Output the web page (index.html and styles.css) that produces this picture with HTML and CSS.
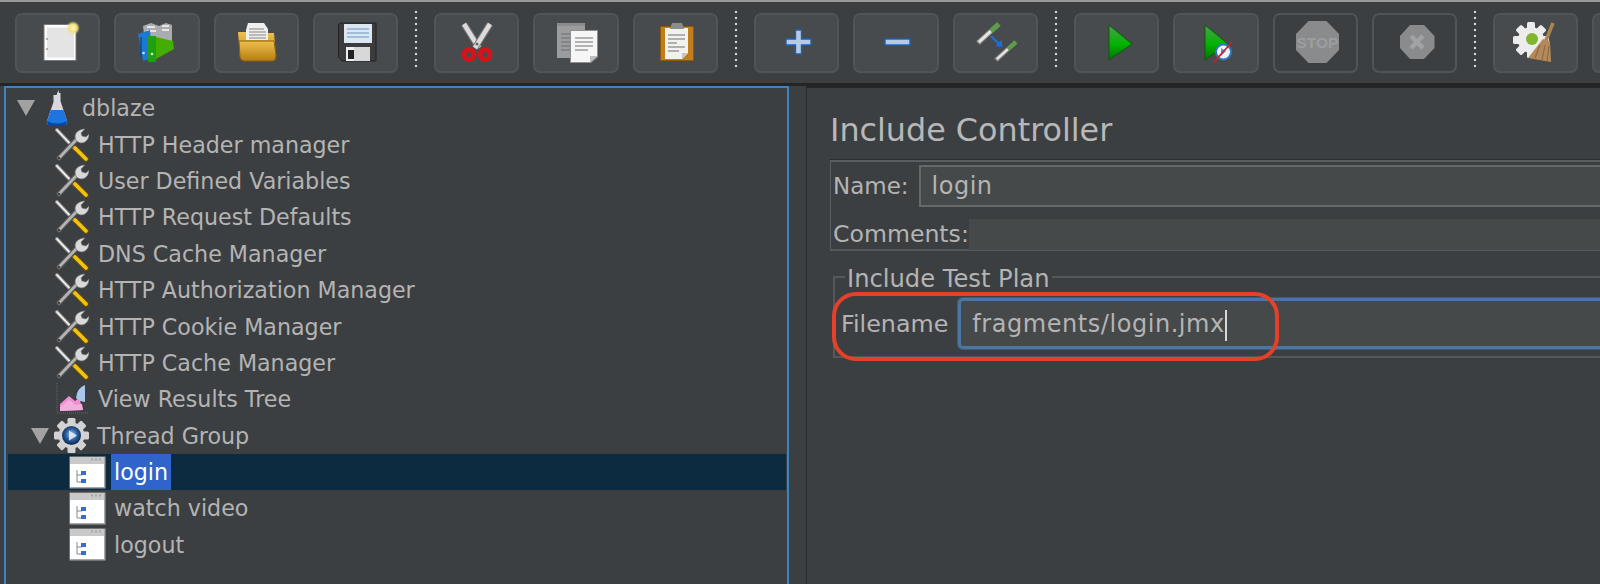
FILE: index.html
```html
<!DOCTYPE html>
<html lang="en">
<head>
<meta charset="utf-8">
<title>JMeter Include Controller</title>
<link rel="stylesheet" href="styles.css">
</head>
<body>
<svg class="defs" width="0" height="0" aria-hidden="true">
  <defs>
    <linearGradient id="yel" x1="0" y1="0" x2="0" y2="1"><stop offset="0" stop-color="#eec04e"/><stop offset="1" stop-color="#b47d10"/></linearGradient>
    <linearGradient id="grn" x1="0" y1="0" x2="0" y2="1"><stop offset="0" stop-color="#4fa04f"/><stop offset=".55" stop-color="#00b400"/><stop offset="1" stop-color="#076d07"/></linearGradient>
    <radialGradient id="glow"><stop offset="0" stop-color="#fff6c0"/><stop offset=".55" stop-color="#f3e27c"/><stop offset="1" stop-color="#f3e27c" stop-opacity="0"/></radialGradient>
    <radialGradient id="ball" cx=".5" cy=".45"><stop offset="0" stop-color="#a9c8ee"/><stop offset=".6" stop-color="#2c5f9e"/><stop offset="1" stop-color="#10305c"/></radialGradient>
    <symbol id="i-wrench" viewBox="0 0 34 34">
      <path d="M2 2 L20 21" stroke="#8e8e8e" stroke-width="3.8" stroke-linecap="round"/>
      <path d="M2 2 L20 21" stroke="#f4f4f4" stroke-width="1.8" stroke-linecap="round"/>
      <path d="M20 20 L31 31" stroke="#6b5200" stroke-width="5.4" stroke-linecap="round"/>
      <path d="M20 20 L31 31" stroke="#f3c20f" stroke-width="3.8" stroke-linecap="round"/>
      <path d="M4 30 L23 10" stroke="#555" stroke-width="5" stroke-linecap="round"/>
      <path d="M4 30 L23 10" stroke="#b4b4b4" stroke-width="2.8" stroke-linecap="round"/>
      <path d="M21 12 C18 6 23 1 30 1 L26 5 L27 8 L31 9 L34 6 C34 12 29 17 23 14 Z" fill="#d9d9d9" stroke="#777" stroke-width=".7"/>
      <circle cx="4" cy="30" r="1.2" fill="#3c3f41"/>
    </symbol>
    <symbol id="i-doc" viewBox="0 0 37 33">
      <rect x=".5" y=".5" width="36" height="32" fill="#a8a8a8"/>
      <rect x="1" y="1" width="34" height="30" fill="#fff"/>
      <rect x="1" y="1" width="34" height="7" fill="#c9c9c9"/>
      <path d="M26 3.500h2M30 3.500h2M22 3.500h2" stroke="#a5a5a5" stroke-width="2"/>
      <path d="M8 14V26H13M8 19H13" stroke="#8a8a8a" fill="none"/>
      <rect x="12" y="15" width="5" height="4" fill="#2f6fd4"/>
      <rect x="12" y="23" width="5" height="4" fill="#2f6fd4"/>
    </symbol>
    <symbol id="i-gear" viewBox="0 0 37 37">
      <g fill="#d2d2d2">
        <rect x="14.5" y="1" width="8" height="35" rx="1.5"/>
        <rect x="14.5" y="1" width="8" height="35" rx="1.5" transform="rotate(45 18.5 18.5)"/>
        <rect x="14.5" y="1" width="8" height="35" rx="1.5" transform="rotate(90 18.5 18.5)"/>
        <rect x="14.5" y="1" width="8" height="35" rx="1.5" transform="rotate(135 18.5 18.5)"/>
        <circle cx="18.5" cy="18.5" r="13"/>
      </g>
      <circle cx="18.5" cy="18.5" r="9.5" fill="url(#ball)"/>
      <path d="M16 13.5 L24 18.5 L16 23.5 Z" fill="#d5e3f5"/>
    </symbol>
  </defs>
</svg>

<header class="toolbar">
  <button class="tool" title="New"><svg class="ico" viewBox="0 0 44 44"><rect x="7.500" y="3" width="33" height="37" fill="#777"/><rect x="8.500" y="4" width="31" height="35" fill="#fdfdfd"/><rect x="11" y="6.500" width="27" height="30" fill="#e4e4e4"/><circle cx="11" cy="18" r="1" fill="#999"/><circle cx="11" cy="28" r="1" fill="#999"/><circle cx="37" cy="7" r="7" fill="url(#glow)"/></svg></button>
  <button class="tool" title="Templates"><svg class="ico" viewBox="0 0 44 44"><path d="M8 5l8-3 8 3 7-3 6 2v18H10z" fill="#a9adb0"/><path d="M12 6h8M27 5h7M12 10h9M27 9h7" stroke="#e5e5e5" stroke-width="2"/><path d="M3 13 L15 9 L17 37 L8 40 Z" fill="#1c78d0"/><path d="M6 16v20" stroke="#0b4d90" stroke-width="1.500"/><circle cx="8.500" cy="32" r="1.300" fill="#cfe3f7"/><path d="M21 16 L38 20 L39 28 L21 38 Z" fill="#44ae00"/><rect x="13" y="15" width="8" height="26" fill="#1fa010"/><circle cx="17" cy="33" r="1.300" fill="#e7ffe0"/></svg></button>
  <button class="tool" title="Open"><svg class="ico" viewBox="0 0 44 44"><path d="M12 9 L14 2 H30 L34 8 V30 H12Z" fill="#efefef"/><path d="M15 8h15M15 11h17M15 14h17M15 17h17" stroke="#a9a9a9" stroke-width="1.300"/><path d="M4 11 H12 V19 H34 V12 H40 L42 34 Q42 40 38 40 H10 Q7 40 6 36 Z" fill="url(#yel)"/><path d="M5 20 H40 L42 34 Q42 40 38 40 H10 Q7 40 6 36 Z" fill="url(#yel)" stroke="#8a5f0c"/></svg></button>
  <button class="tool" title="Save"><svg class="ico" viewBox="0 0 44 44"><path d="M6 2 H42 V40 H8 L4.500 36 V4 Z" fill="#3c3c3e" stroke="#222"/><rect x="10" y="3" width="28" height="19" fill="#dce7f2"/><path d="M13 8H35M13 12H35M13 16H35" stroke="#8eb0d6" stroke-width="1.300"/><rect x="12" y="26" width="24" height="14" fill="#d8d8d8"/><rect x="12" y="26" width="8" height="14" fill="#efefef"/><rect x="14" y="29" width="6" height="9" fill="#222"/></svg></button>
  <span class="sep"></span>
  <button class="tool" title="Cut"><svg class="ico" viewBox="0 0 44 44"><path d="M9 3 L24 27" stroke="#777" stroke-width="6.500"/><path d="M9 3 L24 27" stroke="#dcdcdc" stroke-width="4.500"/><path d="M35 3 L20 27" stroke="#777" stroke-width="6.500"/><path d="M35 3 L20 27" stroke="#dcdcdc" stroke-width="4.500"/><circle cx="14" cy="33.500" r="5" fill="none" stroke="#d3141a" stroke-width="5"/><circle cx="30" cy="33.500" r="5" fill="none" stroke="#d3141a" stroke-width="5"/><circle cx="22" cy="23" r="1.500" fill="#666"/></svg></button>
  <button class="tool" title="Copy"><svg class="ico" viewBox="0 0 44 44"><rect x="3" y="2" width="28" height="35" fill="#9a9c9d"/><rect x="3" y="2" width="28" height="3" fill="#8a8c8d"/><path d="M7 13H22M7 17H22M7 21H22M7 25H22M7 29H22" stroke="#7b7d7e" stroke-width="1.300"/><path d="M16 9 H44 V36 L37 42 H16 Z" fill="#8f8f8f"/><path d="M17 10 H43 V35 L36 41 H17 Z" fill="#f6f6f6"/><path d="M21 17H39M21 21H39M21 25H39M21 29H34" stroke="#9d9d9d" stroke-width="1.300"/><path d="M43 35 H36 V41 Z" fill="#bdbdbd"/></svg></button>
  <button class="tool" title="Paste"><svg class="ico" viewBox="0 0 44 44"><rect x="7" y="5" width="34" height="35" rx="1" fill="#8b5a08"/><rect x="8" y="6" width="32" height="33" fill="#c17f1b"/><path d="M12 7 H35 V32 L29 38 H12 Z" fill="#f1f1ee"/><path d="M15 14H32M15 18H32M15 22H24M15 26H32M15 30H26" stroke="#9a9a9a" stroke-width="1.300"/><path d="M35 32 H29 V38 Z" fill="#c8c8c8"/><path d="M17 8 L19 2 H29 L31 8 Z" fill="#8a8d8b"/></svg></button>
  <span class="sep"></span>
  <button class="tool" title="Expand all"><svg class="ico" viewBox="0 0 44 44"><path d="M20.500 9 H26.500 V18 H36 V24 H26.500 V33 H20.500 V24 H11 V18 H20.500 Z" fill="#b3cbe8" stroke="#1f5fb0" stroke-width="1.400"/></svg></button>
  <button class="tool" title="Collapse all"><svg class="ico" viewBox="0 0 44 44"><rect x="11" y="18" width="25" height="6" fill="#b3cbe8" stroke="#1f5fb0" stroke-width="1.400"/></svg></button>
  <button class="tool" title="Toggle"><svg class="ico" viewBox="0 0 44 44"><path d="M5 22 L18 10" stroke="#9b9b9b" stroke-width="5"/><path d="M6 21 L18 10" stroke="#e8e8e8" stroke-width="2.500"/><path d="M18 10 L26 3" stroke="#5d9c4a" stroke-width="5"/><path d="M23 39 L35 28" stroke="#9b9b9b" stroke-width="4.400"/><path d="M24 38 L35 28" stroke="#e8e8e8" stroke-width="2"/><path d="M35 28 L43 21" stroke="#5d9c4a" stroke-width="4.400"/><path d="M18 15 L26 23" stroke="#1c6fe0" stroke-width="2.200"/><path d="M29.500 26 L22.500 25 L28.500 19 Z" fill="#1c6fe0"/></svg></button>
  <span class="sep"></span>
  <button class="tool" title="Start"><svg class="ico" viewBox="0 0 44 44"><path d="M14 4 L37 23 L14 39 Z" fill="url(#grn)" stroke="#0a5a0a"/></svg></button>
  <button class="tool" title="Start no pauses"><svg class="ico" viewBox="0 0 44 44"><path d="M11 4 L34 23 L11 39 Z" fill="url(#grn)" stroke="#0a5a0a"/><circle cx="29.500" cy="31" r="7.500" fill="#f1f4f8" stroke="#2e78c6" stroke-width="2"/><path d="M27 27 L32 30 L27 35 Z" fill="#6a94c4"/><path d="M20 41 L38 21" stroke="#c8232a" stroke-width="1.800"/></svg></button>
  <button class="tool off" title="Stop"><svg class="ico" viewBox="0 0 44 44"><path d="M15.500 0 H33.500 L46 13 V29 L33.500 42 H15.500 L3 29 V13 Z" fill="#8a8b8c"/><text x="24.500" y="27" class="stoptxt">STOP</text></svg></button>
  <button class="tool off" title="Shutdown"><svg class="ico" viewBox="0 0 44 44"><path d="M17 4 H31 L41.500 15 V27 L31 38 H17 L7 27 V15 Z" fill="#8a8b8c"/><path d="M18 15 L30 27 M30 15 L18 27" stroke="#a2a3a4" stroke-width="4.500"/></svg></button>
  <span class="sep"></span>
  <button class="tool" title="Clear"><svg class="ico" viewBox="0 0 44 44"><g fill="#ececec"><rect x="13" y="1" width="8" height="36" rx="1.500"/><rect x="13" y="1" width="8" height="36" rx="1.500" transform="rotate(45 17 19)"/><rect x="13" y="1" width="8" height="36" rx="1.500" transform="rotate(90 17 19)"/><rect x="13" y="1" width="8" height="36" rx="1.500" transform="rotate(135 17 19)"/><circle cx="17" cy="19" r="13"/></g><circle cx="18" cy="18" r="6" fill="#7fb62a"/><path d="M39 2 L31 22" stroke="#a98352" stroke-width="3.500"/><path d="M29 18 L36 20 L37 41 L14 37 Z" fill="#b58a5a"/><path d="M26 24 L21 37M31 24 L28 39M35 25 L33 40" stroke="#8d6a40" stroke-width="1.200"/></svg></button>
  <button class="tool" title="Clear all"></button>
</header>

<main class="workspace">
  <nav class="tree">
    <div class="row root"><span class="twisty"></span><svg class="flask" viewBox="0 0 22 36"><path d="M12.500 0 L13 3 H14.500 V11 L21 31 Q22 35 18 35 H4 Q0 35 1 31 L7.500 12 V5 H10.500 Z" fill="#d6dae0"/><path d="M5 20 H17.500 L21 31 Q22 35 18 35 H4 Q0 35 1 31 Z" fill="#1f74e0"/><path d="M1 31 Q11 36 21 31 L20 35 H2 Z" fill="#0a46a8"/></svg><span class="label">dblaze</span></div>
    <div class="row lvl1"><svg class="wrench"><use href="#i-wrench"/></svg><span class="label">HTTP Header manager</span></div>
    <div class="row lvl1"><svg class="wrench"><use href="#i-wrench"/></svg><span class="label">User Defined Variables</span></div>
    <div class="row lvl1"><svg class="wrench"><use href="#i-wrench"/></svg><span class="label">HTTP Request Defaults</span></div>
    <div class="row lvl1"><svg class="wrench"><use href="#i-wrench"/></svg><span class="label">DNS Cache Manager</span></div>
    <div class="row lvl1"><svg class="wrench"><use href="#i-wrench"/></svg><span class="label">HTTP Authorization Manager</span></div>
    <div class="row lvl1"><svg class="wrench"><use href="#i-wrench"/></svg><span class="label">HTTP Cookie Manager</span></div>
    <div class="row lvl1"><svg class="wrench"><use href="#i-wrench"/></svg><span class="label">HTTP Cache Manager</span></div>
    <div class="row lvl1"><svg class="wrench" viewBox="0 0 34 34"><path d="M2 1 V31 H33" fill="none" stroke="#666" stroke-dasharray="1 1"/><path d="M5 29 V22 L14 14 L20 19 L24 16 L28 28 Z" fill="#f08fd0"/><path d="M5 29 V25 L14 18 L21 23 L27 22 L28 28 Z" fill="#f3aede"/><path d="M21 16 Q22 6 30 3 V20 L25 19 Z" fill="#a9c8ee"/></svg><span class="label">View Results Tree</span></div>
    <div class="row group"><span class="twisty"></span><svg class="gear"><use href="#i-gear"/></svg><span class="label">Thread Group</span></div>
    <div class="row lvl2 selected"><svg class="doc"><use href="#i-doc"/></svg><span class="label">login</span></div>
    <div class="row lvl2"><svg class="doc"><use href="#i-doc"/></svg><span class="label">watch video</span></div>
    <div class="row lvl2"><svg class="doc"><use href="#i-doc"/></svg><span class="label">logout</span></div>
  </nav>

  <section class="detail">
    <h1 class="title">Include Controller</h1>
    <div class="namepanel">
      <div class="namerow"><label class="fieldlabel">Name:</label><div class="field name-field">login</div></div>
      <div class="commentrow"><label class="fieldlabel">Comments:</label><div class="comment-field"></div></div>
    </div>
    <fieldset class="plan">
      <legend class="legend">Include Test Plan</legend>
      <div class="filerow"><label class="fieldlabel">Filename</label><div class="file-field"><span>fragments/login.jmx</span><i class="caret"></i></div></div>
    </fieldset>
    <div class="callout"></div>
  </section>
</main>
</body>
</html>
```

FILE: styles.css
```css
* { box-sizing: border-box; }
html, body { margin: 0; height: 100%; }
body {
  width: 1600px;
  height: 584px;
  overflow: hidden;
  background: #3c3f41;
  color: #b4b4b4;
  font-family: "DejaVu Sans", "Liberation Sans", sans-serif;
  font-size: 22.2px;
}
.defs { position: absolute; }

.toolbar {
  height: 86px;
  display: flex;
  align-items: flex-start;
  gap: 14px;
  padding: 11px 0 0 15px;
  overflow: hidden;
  border-top: 2px solid #9a9a9a;
  border-bottom: 3px solid #232527;
  background: #3c3f41;
}
.tool {
  flex: 0 0 85.3px;
  height: 60px;
  padding: 0;
  display: flex;
  align-items: center;
  justify-content: center;
  background: #484b4d;
  border: 2px solid #515456;
  border-radius: 7px;
}
.tool.off { background: #3c3f41; }
.ico { width: 44px; height: 44px; overflow: visible; flex: none; }
.stoptxt { font-family: "Liberation Sans", sans-serif; font-weight: 700; font-size: 15.5px; fill: #9d9e9f; text-anchor: middle; }
.sep {
  flex: 0 0 8px;
  height: 62px;
  margin-top: -4px;
  background: radial-gradient(circle, #d6d6d6 1.2px, transparent 1.6px) center top / 8px 6px repeat-y;
}

.workspace { display: flex; height: 498px; }

.tree {
  flex: 0 0 785px;
  margin-left: 4px;
  padding: 2px 0 0 2px;
  border: 2px solid #3d84c4;
  border-bottom: none;
  overflow: hidden;
}
.row {
  height: 36.4px;
  display: flex;
  align-items: center;
  white-space: nowrap;
}
.label { padding: 0 3px; line-height: 37px; height: 36px; }
.twisty {
  width: 0; height: 0;
  border-left: 9px solid transparent;
  border-right: 9px solid transparent;
  border-top: 16px solid #a2a2a2;
  flex: none;
}
.root { padding-left: 9px; }
.root .flask { width: 22px; height: 36px; margin-left: 11px; margin-right: 11px; flex: none; }
.lvl1 { padding-left: 47px; }
.wrench { width: 34px; height: 34px; margin-right: 6px; flex: none; }
.group { padding-left: 23px; }
.gear { width: 37px; height: 37px; margin-left: 4px; margin-right: 4px; flex: none; }
.lvl2 { padding-left: 61px; }
.doc { width: 37px; height: 33px; margin-right: 5px; flex: none; }
.selected { background: #0c2a40; margin-right: 1px; }
.selected .label { background: #2f65ca; color: #fff; }

.detail {
  position: relative;
  flex: 1;
  min-width: 0;
  margin-left: 17px;
  padding-left: 23px;
  border-top: 2px solid #232527;
  border-left: 1px solid #2a2c2e;
  overflow: hidden;
}
.title {
  margin: 0;
  height: 72px;
  padding-top: 18px;
  font-weight: 400;
  font-size: 31.8px;
  line-height: 48px;
  color: #b8b8b8;
}
.namepanel {
  height: 91px;
  margin-right: -4px;
  padding: 3px 0 0 2px;
  border-top: 2px solid #5a5d5f;
  border-left: 1px solid #5a5d5f;
  border-bottom: 2px solid #55585a;
  box-shadow: 0 -1px 0 #2a2c2e;
}
.namerow { display: flex; align-items: center; height: 42px; font-size: 23px; }
.commentrow { display: flex; align-items: center; height: 32px; margin-top: 11px; font-size: 23.6px; }
.fieldlabel { flex: none; }
.name-field {
  margin-left: 10px;
  flex: 1;
  height: 42px;
  line-height: 38px;
  padding-left: 11px;
  background: #46494a;
  border: 2px solid #666869;
  font-size: 24px;
  letter-spacing: .5px;
}
.comment-field { flex: 1; height: 31px; background: #46494a; }
.plan {
  margin: 14px -4px 0 3px;
  padding: 8px 0 0 6px;
  min-width: 0;
  height: 93px;
  border: 2px solid #55585a;
  border-right: none;
}
.legend { margin-left: 4px; padding: 0 2px; height: 24px; line-height: 28px; font-size: 24.2px; }
.filerow { display: flex; align-items: center; height: 51px; margin-top: 1px; font-size: 23.8px; }
.file-field {
  margin-left: 10px;
  flex: 1;
  height: 51px;
  padding-left: 11px;
  line-height: 47px;
  background: #46494a;
  border: 3px solid #4a76a6;
  border-radius: 5px 0 0 5px;
  box-shadow: 0 0 0 1px #47586a;
  white-space: nowrap;
  font-size: 24px;
  letter-spacing: .55px;
}
.caret {
  display: inline-block;
  width: 2px;
  height: 31px;
  vertical-align: middle;
  background: #d8d8d8;
}
.callout {
  position: absolute;
  left: 25px;
  top: 204px;
  width: 447px;
  height: 69px;
  border: 4px solid #e5412a;
  border-radius: 24px;
}
```
